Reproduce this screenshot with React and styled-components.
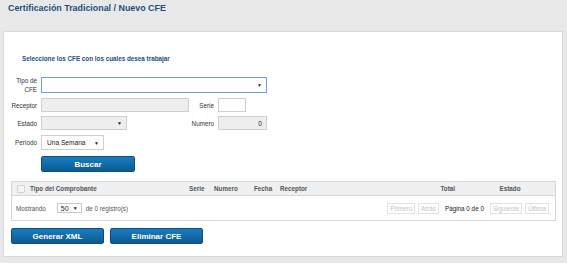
import styled, { createGlobalStyle } from "styled-components";

const GlobalStyle = createGlobalStyle`
  body {
    margin: 0;
    background: #e8e8e8;
    font-family: "Liberation Sans", Arial, sans-serif;
  }
`;

const Page = styled.div`
  width: 567px;
  height: 263px;
  padding: 0 4px 0 3px;
  box-sizing: border-box;
`;

const PageTitle = styled.h1`
  margin: 0;
  padding: 3px 0 0 5px;
  height: 31px;
  box-sizing: border-box;
  font-size: 8.9px;
  font-weight: bold;
  color: #1d4e7e;
`;

const Panel = styled.div`
  background: #fff;
  border: 1px solid #d9d9d9;
  height: 226px;
  box-sizing: border-box;
  padding: 0 6px 0 7px;
`;

const Heading = styled.h2`
  margin: 0;
  padding: 23px 0 0 11px;
  height: 44px;
  box-sizing: border-box;
  font-size: 6.3px;
  font-weight: bold;
  color: #1d4e7e;
`;

const Form = styled.div`
  display: grid;
  grid-template-columns: 30px 148px 29px 49px;
  row-gap: 4px;
  align-items: center;
`;

const Label = styled.label`
  font-size: 6.3px;
  color: #333;
  text-align: right;
  padding-right: 4px;
  line-height: 9px;
`;

const Field = styled.div`
  height: ${(p) => p.$h || 14}px;
  width: ${(p) => p.$w}px;
  box-sizing: border-box;
  border: 1px solid ${(p) => (p.$focus ? "#6b9be0" : "#cfcfcf")};
  background: ${(p) => (p.$grey ? "#eeeeee" : "#fff")};
  grid-column: ${(p) => p.$span || "auto"};
  display: flex;
  align-items: center;
  justify-content: ${(p) => (p.$right ? "flex-end" : "space-between")};
  padding: 0 4px 0 5px;
  font-size: 6.6px;
  color: #222;
  margin-top: ${(p) => p.$mt || 0}px;
`;

const Caret = styled.span`
  font-size: 5px;
  color: #222;
`;

const BlueButton = styled.button`
  width: ${(p) => p.$w || 93}px;
  height: 16px;
  margin-top: ${(p) => p.$mt || 0}px;
  border: 1px solid #0b4f80;
  border-radius: 2px;
  background: linear-gradient(#1b7dbd, #0b5b93);
  color: #fff;
  font-family: "Liberation Sans", Arial, sans-serif;
  font-size: 8px;
  font-weight: bold;
  padding: 0;
`;

const Table = styled.div`
  margin-top: 9px;
  border: 1px solid #d6d6d6;
  width: 545px;
  box-sizing: border-box;
`;

const HeadRow = styled.div`
  display: grid;
  grid-template-columns: 18px 159px 25px 40px 26px 1fr 60px 90px;
  align-items: center;
  height: 13px;
  background: #eef0f2;
  border-bottom: 1px solid #d6d6d6;
  font-size: 6.3px;
  font-weight: bold;
  color: #555;
`;

const HeadCell = styled.div`
  text-align: ${(p) => p.$align || "left"};
  padding-right: ${(p) => p.$pr || 0}px;
`;

const Check = styled.span`
  display: block;
  width: 6px;
  height: 6px;
  margin-left: 5px;
  border: 1px solid #d3d3d3;
  background: #f4f4f4;
  border-radius: 1px;
`;

const FootRow = styled.div`
  height: 24px;
  display: flex;
  align-items: center;
  padding: 0 6px 0 4px;
  font-size: 6.3px;
  color: #555;
`;

const PageSize = styled.div`
  margin: 0 4px 0 11px;
  width: 25px;
  height: 10px;
  box-sizing: border-box;
  border: 1px solid #c8c8c8;
  display: flex;
  align-items: center;
  justify-content: space-between;
  padding: 0 3px;
  font-size: 7px;
  color: #222;
`;

const Pager = styled.div`
  margin-left: auto;
  display: flex;
  gap: 3px;
  align-items: center;
`;

const PagerBtn = styled.span`
  border: 1px solid #e2e2e2;
  color: #c4c4c4;
  padding: 1px 2px;
  line-height: 7px;
`;

const PageInfo = styled.span`
  color: #222;
  margin: 0 3px;
`;

const Actions = styled.div`
  display: flex;
  gap: 6px;
  margin-top: 7px;
`;

export default function App() {
  return (
    <>
      <GlobalStyle />
      <Page>
        <PageTitle>Certificación Tradicional / Nuevo CFE</PageTitle>
        <Panel>
          <Heading>Seleccione los CFE con los cuales desea trabajar</Heading>
          <Form>
            <Label>
              Tipo de
              <br />
              CFE
            </Label>
            <Field $span="2 / 5" $w={226} $h={16} $focus>
              <span />
              <Caret>▼</Caret>
            </Field>

            <Label>Receptor</Label>
            <Field $w={148} $grey />
            <Label>Serie</Label>
            <Field $w={28} />

            <Label>Estado</Label>
            <Field $w={86} $grey>
              <span />
              <Caret>▼</Caret>
            </Field>
            <Label>Numero</Label>
            <Field $w={49} $grey $right>
              0
            </Field>

            <Label>Período</Label>
            <Field $w={63} $h={15} $mt={1} $span="2 / 5">
              <span>Una Semana</span>
              <Caret>▼</Caret>
            </Field>

            <span />
            <BlueButton $w={94} $mt={2}>
              Buscar
            </BlueButton>
          </Form>

          <Table>
            <HeadRow>
              <Check />
              <HeadCell>Tipo del Comprobante</HeadCell>
              <HeadCell>Serie</HeadCell>
              <HeadCell>Numero</HeadCell>
              <HeadCell>Fecha</HeadCell>
              <HeadCell>Receptor</HeadCell>
              <HeadCell $align="right" $pr={10}>
                Total
              </HeadCell>
              <HeadCell $align="center">Estado</HeadCell>
            </HeadRow>
            <FootRow>
              Mostrando
              <PageSize>
                50
                <Caret>▼</Caret>
              </PageSize>
              de 0 registro(s)
              <Pager>
                <PagerBtn>Primero</PagerBtn>
                <PagerBtn>Atrás</PagerBtn>
                <PageInfo>Página 0 de 0</PageInfo>
                <PagerBtn>Siguiente</PagerBtn>
                <PagerBtn>Última</PagerBtn>
              </Pager>
            </FootRow>
          </Table>

          <Actions>
            <BlueButton>Generar XML</BlueButton>
            <BlueButton>Eliminar CFE</BlueButton>
          </Actions>
        </Panel>
      </Page>
    </>
  );
}
